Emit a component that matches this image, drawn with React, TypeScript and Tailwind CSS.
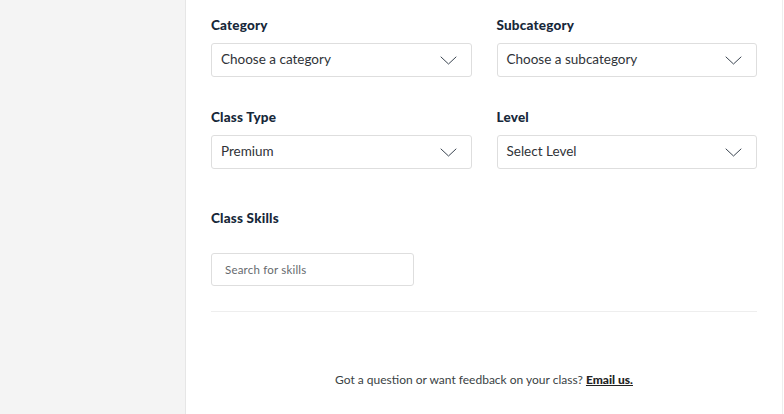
import React from "react";

const Chevron = () => (
  <svg width="17" height="9" viewBox="0 0 17 9" fill="none" className="shrink-0">
    <path d="M1 1l7.5 7L16 1" stroke="#3a4450" strokeWidth="1" strokeLinecap="round" strokeLinejoin="round" />
  </svg>
);

const Select = ({ label, value }: { label: string; value: string }) => (
  <div className="flex flex-col">
    <div className="h-[18px] flex items-center text-[13.5px] font-black text-[#17283a] tracking-[0.2px]">{label}</div>
    <div className="mt-[9px] h-[34px] border border-[#dedede] rounded-[3px] bg-white flex items-center justify-between pl-[9px] pr-[14px]">
      <span className="text-[13.5px] text-[#2f3338] -mt-px">{value}</span>
      <Chevron />
    </div>
  </div>
);

export default function App() {
  return (
    <div className="w-[784px] h-[414px] flex bg-white overflow-hidden" style={{ fontFamily: "Lato, 'Noto Sans', sans-serif" }}>
      <div className="w-[186px] shrink-0 h-full bg-[#f4f4f4] border-r border-[#e6e6e6]" />
      <div className="w-[596px] shrink-0 h-full flex flex-col px-[25px] pt-[16px]">
        <div className="grid grid-cols-2 gap-x-[25px] gap-y-[31px]">
          <Select label="Category" value="Choose a category" />
          <Select label="Subcategory" value="Choose a subcategory" />
          <Select label="Class Type" value="Premium" />
          <Select label="Level" value="Select Level" />
        </div>
        <div className="mt-[40px] h-[18px] flex items-center text-[13.5px] font-black text-[#17283a] tracking-[0.2px]">Class Skills</div>
        <div className="mt-[26px] w-[203px] h-[33px] border border-[#dedede] rounded-[3px] flex items-center pl-[13px] text-[11.5px] text-[#666a6e] tracking-[0.2px]">
          Search for skills
        </div>
        <div className="mt-[25px] h-px bg-[#eeeeee]" />
        <div className="mt-[59px] h-[17px] flex items-center justify-center text-[12px] text-[#3a3f44]">
          <span>
            Got a question or want feedback on your class?{" "}
            <span className="font-black underline text-[#222]">Email us.</span>
          </span>
        </div>
      </div>
      <div className="flex-1 h-full border-l border-[#eeeeee]" />
    </div>
  );
}
